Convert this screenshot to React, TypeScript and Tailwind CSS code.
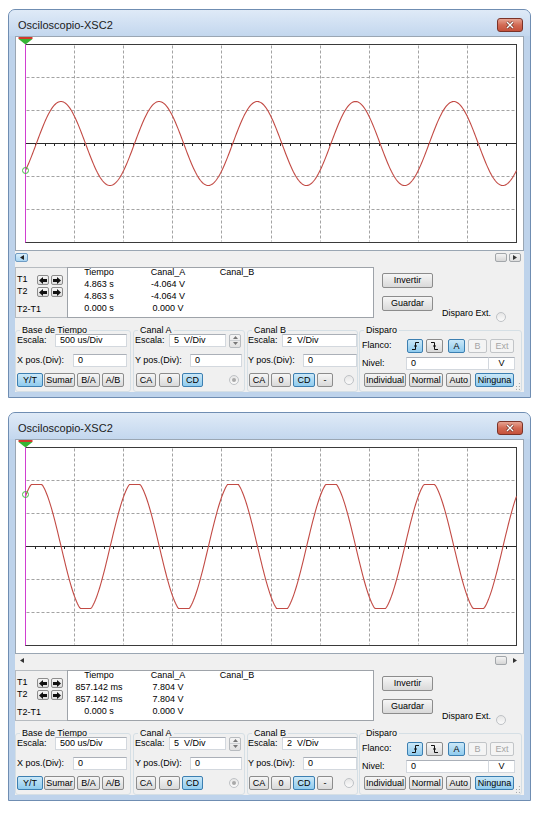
import React from 'react';

type Scope = {
  rows: [string, string, string][];
  clipped: boolean;
  marker: number;
  blueScroll: boolean;
};

const scopes: Scope[] = [
  {
    rows: [
      ['T1', '4.863 s', '-4.064 V'],
      ['T2', '4.863 s', '-4.064 V'],
      ['T2-T1', '0.000 s', '0.000 V'],
    ],
    clipped: false,
    marker: 126,
    blueScroll: true,
  },
  {
    rows: [
      ['T1', '857.142 ms', '7.804 V'],
      ['T2', '857.142 ms', '7.804 V'],
      ['T2-T1', '0.000 s', '0.000 V'],
    ],
    clipped: true,
    marker: 47,
    blueScroll: false,
  },
];

const GW = 491;
const GH = 198;
const PERIOD = 98.2;

function wave(clipped: boolean) {
  const pts: string[] = [];
  for (let x = 0; x <= GW; x++) {
    let v: number;
    if (clipped) {
      v = 66 * Math.sin((2 * Math.PI * (x + 13.5)) / PERIOD);
      v = Math.max(-62, Math.min(62, v));
    } else {
      v = 42 * Math.sin((2 * Math.PI * x) / PERIOD - 0.695);
    }
    pts.push(`${x},${(99 - v).toFixed(2)}`);
  }
  return pts.join(' ');
}

const Plot = ({ clipped, marker }: { clipped: boolean; marker: number }) => {
  const cols = Array.from({ length: 9 }, (_, i) => Math.round(((i + 1) * GW) / 10));
  const rows = [33, 66, 132, 165];
  const ticks = Array.from({ length: 49 }, (_, i) => Math.round(((i + 1) * GW) / 50));
  return (
    <svg width="507" height="213" className="block">
      <g transform="translate(9.5,7.5)">
        <rect x="0" y="0" width={GW} height={GH} fill="#fff" stroke="#3a3a3a" />
        {cols.map((x) => (
          <line key={'c' + x} x1={x} x2={x} y1="1" y2={GH - 1} stroke="#a3a3a3" strokeDasharray="3 2" />
        ))}
        {rows.map((y) => (
          <line key={'r' + y} x1="1" x2={GW - 1} y1={y} y2={y} stroke="#a3a3a3" strokeDasharray="3 2" />
        ))}
        <line x1="0" x2={GW} y1="99" y2="99" stroke="#2a2a2a" />
        {ticks.map((x) => (
          <line key={'t' + x} x1={x} x2={x} y1="99" y2="101.5" stroke="#2a2a2a" />
        ))}
        <polyline points={wave(clipped)} fill="none" stroke="#c24a44" strokeWidth="1.1" />
        <line x1="0" x2="0" y1="-5" y2={GH} stroke="#d13fd1" />
        <circle cx="0" cy={marker} r="3" fill="none" stroke="#46b946" />
        <rect x="-7" y="-7.5" width="14" height="2" fill="#d23a2c" />
        <polygon points="-7,-5.5 7,-5.5 0,0" fill="#35b535" />
      </g>
    </svg>
  );
};

type BtnState = 'normal' | 'on' | 'off';

const Btn = ({
  w,
  state = 'normal',
  className = '',
  children,
}: {
  w: string;
  state?: BtnState;
  className?: string;
  children: React.ReactNode;
}) => {
  const look =
    state === 'on'
      ? 'border-[#3c7fb1] bg-linear-to-b from-[#cbe8f8] to-[#8fcbee]'
      : state === 'off'
        ? 'border-[#c2c5c8] bg-[#f4f4f4] text-[#a4a4a4]'
        : 'border-[#8c8c8c] bg-linear-to-b from-[#f6f6f6] to-[#d9d9d9]';
  return (
    <div className={`h-[14px] ${w} ${look} ${className} border rounded-[2px] flex items-center justify-center leading-none`}>
      {children}
    </div>
  );
};

const Field = ({ w, children }: { w: string; children?: React.ReactNode }) => (
  <div className={`h-[13px] ${w} bg-white border border-[#d3d8de] border-t-[#abb0b8] flex items-center pl-[4px] whitespace-pre leading-none`}>
    {children}
  </div>
);

const Radio = ({ dot = false }: { dot?: boolean }) => (
  <div className="w-[10px] h-[10px] rounded-full border border-[#bfc2c6] bg-linear-to-b from-[#e6e6e6] to-[#fbfbfb] flex items-center justify-center">
    {dot && <div className="w-[4px] h-[4px] rounded-full bg-[#a9a9a9]" />}
  </div>
);

const Arrow = ({ dir }: { dir: 'l' | 'r' }) => (
  <div className="w-[12px] h-[10px] border border-[#8c8c8c] rounded-[2px] bg-linear-to-b from-[#f6f6f6] to-[#dcdcdc] flex items-center justify-center">
    <svg width="8" height="7" viewBox="0 0 8 7">
      <polygon
        points={dir === 'l' ? '0,3.5 4,0 4,2 8,2 8,5 4,5 4,7' : '8,3.5 4,0 4,2 0,2 0,5 4,5 4,7'}
        fill="#111"
      />
    </svg>
  </div>
);

const Edge = ({ rising }: { rising: boolean }) => (
  <svg width="9" height="8" viewBox="0 0 9 8">
    <path d={rising ? 'M1 7.5H4.5V0.5H8' : 'M1 0.5H4.5V7.5H8'} stroke="#111" fill="none" />
    <path d="M3 4H6" stroke="#111" />
  </svg>
);

const Group = ({ w, title, children }: { w: string; title: string; children: React.ReactNode }) => (
  <fieldset className={`${w} h-[67px] border border-[#d5dfe5] rounded-[3px] min-w-0`}>
    <legend className="ml-[4px] px-[2px] text-[9px] leading-[10px]">{title}</legend>
    {children}
  </fieldset>
);

const Window = ({ s }: { s: Scope }) => (
  <div className="w-[523px] h-[389px] rounded-t-[7px] border border-[#6f8db2] bg-[#bed3eb] flex flex-col">
    <div className="h-[26px] pt-[4px] pl-[9px] pr-[7px] flex items-center justify-between rounded-t-[6px] bg-linear-to-b from-[#dfeaf7] to-[#c3d7ee]">
      <span className="text-[11px] text-[#1b1b1b] font-['Liberation_Sans',Arial,sans-serif]">Osciloscopio-XSC2</span>
      <div className="w-[26px] h-[14px] rounded-[3px] border border-[#7b3328] bg-linear-to-b from-[#e6a392] via-[#d26a54] to-[#c5513b] flex items-center justify-center">
        <svg width="10" height="8" viewBox="0 0 10 8">
          <path d="M2 1L8 7M8 1L2 7" stroke="#5a2018" strokeWidth="2.6" />
          <path d="M2 1L8 7M8 1L2 7" stroke="#fff" strokeWidth="1.5" />
        </svg>
      </div>
    </div>

    <div className="mx-[6px] h-[356px] bg-[#f0f0f0] flex flex-col text-[9px] text-black">
      {/* pantalla */}
      <div className="h-[215px] border border-[#9aa6b3] bg-white">
        <Plot clipped={s.clipped} marker={s.marker} />
      </div>

      {/* barra de desplazamiento */}
      <div className="h-[13px] flex items-center justify-between pr-[3px]">
        {s.blueScroll ? (
          <div className="w-[13px] h-[9px] rounded-[2px] border border-[#6f9cc4] bg-linear-to-b from-[#d9eefb] to-[#a9d5f2] flex items-center justify-center">
            <svg width="4" height="5" viewBox="0 0 4 5"><polygon points="4,0 0,2.5 4,5" fill="#222" /></svg>
          </div>
        ) : (
          <div className="w-[13px] h-[9px] flex items-center justify-center">
            <svg width="4" height="5" viewBox="0 0 4 5"><polygon points="4,0 0,2.5 4,5" fill="#333" /></svg>
          </div>
        )}
        <div className="flex items-center gap-[2px]">
          <div className="w-[12px] h-[9px] rounded-[2px] border border-[#a2a6aa] bg-linear-to-b from-[#f4f4f4] to-[#d6d6d6]" />
          {s.blueScroll ? (
            <div className="w-[12px] h-[9px] rounded-[2px] border border-[#a2a6aa] bg-linear-to-b from-[#f4f4f4] to-[#dedede] flex items-center justify-center">
              <svg width="4" height="5" viewBox="0 0 4 5"><polygon points="0,0 4,2.5 0,5" fill="#333" /></svg>
            </div>
          ) : (
            <div className="w-[12px] h-[9px] flex items-center justify-center">
              <svg width="4" height="5" viewBox="0 0 4 5"><polygon points="0,0 4,2.5 0,5" fill="#333" /></svg>
            </div>
          )}
        </div>
      </div>

      {/* cursores */}
      <div className="mt-[3px] h-[51px] flex">
        <div className="w-[52px] border border-r-0 border-[#b6bbc0] flex flex-col pt-[6px]">
          <div className="h-[12px] flex items-center">
            <span className="w-[21px] pl-[1px]">T1</span>
            <Arrow dir="l" />
            <div className="w-[2px]" />
            <Arrow dir="r" />
          </div>
          <div className="h-[12px] flex items-center">
            <span className="w-[21px] pl-[1px]">T2</span>
            <Arrow dir="l" />
            <div className="w-[2px]" />
            <Arrow dir="r" />
          </div>
          <div className="mt-[6px] h-[12px] flex items-center pl-[1px]">T2-T1</div>
        </div>
        <div className="w-[307px] border border-[#9ea3a9] bg-white">
          <div className="-mt-[1px] grid grid-cols-[62px_76px_62px] leading-[12px] text-center">
            <span className="leading-[11px]">Tiempo</span>
            <span className="leading-[11px]">Canal_A</span>
            <span className="leading-[11px]">Canal_B</span>
            {s.rows.map((r) => (
              <React.Fragment key={r[0]}>
                <span>{r[1]}</span>
                <span>{r[2]}</span>
                <span />
              </React.Fragment>
            ))}
          </div>
        </div>
        <div className="ml-[8px] flex flex-col">
          <Btn w="w-[51px]" className="mt-[6px] h-[15px]">Invertir</Btn>
          <Btn w="w-[51px]" className="mt-[8px] h-[15px]">Guardar</Btn>
        </div>
        <div className="ml-[9px] flex flex-col justify-end">
          <div className="h-[12px] -mb-[2px] flex items-center">
            <span>Disparo Ext.</span>
            <div className="ml-[5px] translate-y-[3px]">
              <Radio />
            </div>
          </div>
        </div>
      </div>

      {/* controles */}
      <div className="mt-[7px] flex">
        <Group w="w-[116px]" title="Base de Tiempo">
          <div className="-mt-[1px] h-[13px] flex items-center">
            <span className="w-[39px] pl-[1px]">Escala:</span>
            <Field w="w-[72px]">500 us/Div</Field>
          </div>
          <div className="mt-[7px] h-[13px] flex items-center">
            <span className="w-[57px] pl-[1px]">X pos.(Div):</span>
            <Field w="w-[54px]">0</Field>
          </div>
          <div className="mt-[6px] pl-[1px] flex">
            <Btn w="w-[26px]" state="on">Y/T</Btn>
            <Btn w="w-[31px]" className="ml-[1px]">Sumar</Btn>
            <Btn w="w-[23px]" className="ml-[2px]">B/A</Btn>
            <Btn w="w-[22px]" className="ml-[2px]">A/B</Btn>
          </div>
        </Group>

        <div className="w-[2px]" />
        <Group w="w-[112px]" title="Canal A">
          <div className="-mt-[1px] h-[13px] flex items-center">
            <span className="w-[35px] pl-[1px]">Escala:</span>
            <Field w="w-[57px]">5  V/Div</Field>
            <div className="ml-[3px] w-[12px] h-[14px] flex flex-col border border-[#b7bbbf] rounded-[2px] bg-linear-to-b from-[#f5f5f5] to-[#e1e1e1]">
              <div className="flex-1 flex items-center justify-center border-b border-[#cdd0d3]">
                <svg width="5" height="3" viewBox="0 0 5 3"><polygon points="0,3 2.5,0 5,3" fill="#777" /></svg>
              </div>
              <div className="flex-1 flex items-center justify-center">
                <svg width="5" height="3" viewBox="0 0 5 3"><polygon points="0,0 2.5,3 5,0" fill="#777" /></svg>
              </div>
            </div>
          </div>
          <div className="mt-[7px] h-[13px] flex items-center">
            <span className="w-[56px] pl-[1px]">Y pos.(Div):</span>
            <Field w="w-[52px]">0</Field>
          </div>
          <div className="mt-[6px] pl-[2px] flex items-center">
            <Btn w="w-[20px]">CA</Btn>
            <Btn w="w-[21px]" className="ml-[3px]">0</Btn>
            <Btn w="w-[21px]" state="on" className="ml-[2px]">CD</Btn>
            <div className="ml-[26px]">
              <Radio dot />
            </div>
          </div>
        </Group>

        <div className="w-[2px]" />
        <Group w="w-[111px]" title="Canal B">
          <div className="-mt-[1px] h-[13px] flex items-center">
            <span className="w-[34px]">Escala:</span>
            <Field w="w-[75px]">2  V/Div</Field>
          </div>
          <div className="mt-[7px] h-[13px] flex items-center">
            <span className="w-[55px]">Y pos.(Div):</span>
            <Field w="w-[54px]">0</Field>
          </div>
          <div className="mt-[6px] pl-[1px] flex items-center">
            <Btn w="w-[20px]">CA</Btn>
            <Btn w="w-[20px]" className="ml-[2px]">0</Btn>
            <Btn w="w-[22px]" state="on" className="ml-[2px]">CD</Btn>
            <Btn w="w-[16px]" className="ml-[2px]">-</Btn>
            <div className="ml-[11px]">
              <Radio />
            </div>
          </div>
        </Group>

        <div className="w-[1px]" />
        <Group w="w-[163px]" title="Disparo">
          <div className="mt-[4px] h-[14px] flex items-center">
            <span className="w-[47px] pl-[2px]">Flanco:</span>
            <Btn w="w-[16px]" state="on"><Edge rising /></Btn>
            <Btn w="w-[17px]" className="ml-[3px]"><Edge rising={false} /></Btn>
            <Btn w="w-[17px]" state="on" className="ml-[5px]">A</Btn>
            <Btn w="w-[19px]" state="off" className="ml-[3px]">B</Btn>
            <Btn w="w-[24px]" state="off" className="ml-[3px]">Ext</Btn>
          </div>
          <div className="mt-[4px] h-[13px] flex items-center">
            <span className="w-[46px] pl-[2px]">Nivel:</span>
            <Field w="w-[83px]">0</Field>
            <div className="h-[13px] w-[26px] bg-white border border-l-0 border-[#d3d8de] border-t-[#abb0b8] flex items-center justify-center leading-none">V</div>
          </div>
          <div className="mt-[3px] pl-[4px] flex items-center">
            <Btn w="w-[43px]">Individual</Btn>
            <Btn w="w-[35px]" className="ml-[3px]">Normal</Btn>
            <Btn w="w-[25px]" className="ml-[3px]">Auto</Btn>
            <Btn w="w-[40px]" state="on" className="ml-[4px]">Ninguna</Btn>
            <svg width="6" height="8" viewBox="0 0 6 8" className="ml-[1px] self-end mb-[-3px]">
              <rect x="4" y="1" width="1" height="1" fill="#9aa0a6" />
              <rect x="4" y="4" width="1" height="1" fill="#9aa0a6" />
              <rect x="1" y="4" width="1" height="1" fill="#9aa0a6" />
              <rect x="4" y="7" width="1" height="1" fill="#9aa0a6" />
              <rect x="1" y="7" width="1" height="1" fill="#9aa0a6" />
            </svg>
          </div>
        </Group>
      </div>
    </div>
    <div className="h-[5px]" />
  </div>
);

export default function App() {
  return (
    <div className="min-h-[820px] bg-white pt-[9px] pl-[8px] flex flex-col gap-[14px] font-['Liberation_Sans',Arial,sans-serif]">
      {scopes.map((s, i) => (
        <Window key={i} s={s} />
      ))}
    </div>
  );
}
